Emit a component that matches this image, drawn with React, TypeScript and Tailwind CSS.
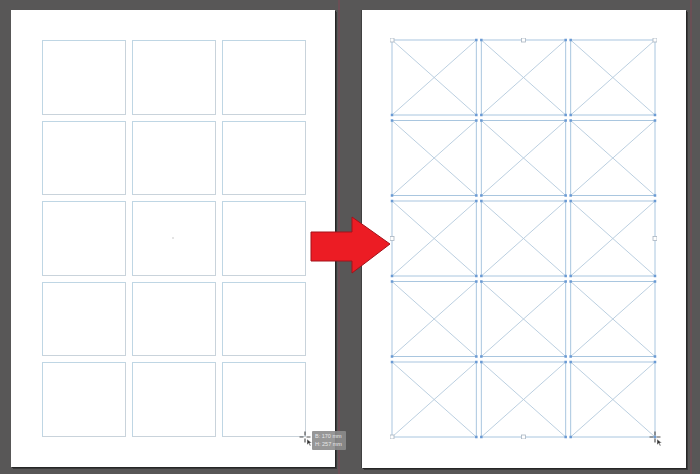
import React from "react";

// Layout grid geometry (px) shared by both pages
const GRID_W = 263;
const GRID_H = 397;
const COLS = 3;
const ROWS = 5;
const GAP_X = 5;
const GAP_Y = 5.5;
const CELL_W = (GRID_W - GAP_X * (COLS - 1)) / COLS;
const CELL_H = (GRID_H - GAP_Y * (ROWS - 1)) / ROWS;

const Cursor = () => (
  <svg width="16" height="16" viewBox="0 0 16 16" className="block">
    <path d="M6 0.5v4M6 7.5v4M0.5 6h4M7.5 6h4" stroke="#555" strokeWidth="1.2" />
    <path d="M8 8l0 6 1.6-1.6 1.4 2.6 1-0.6-1.4-2.4 2.2 0z" fill="#333" stroke="#fff" strokeWidth="0.5" />
  </svg>
);

const PlainGrid = () => (
  <div className="grid grid-cols-3 grid-rows-5 gap-x-[6px] gap-y-[6px] w-[264px] h-[397px]">
    {Array.from({ length: COLS * ROWS }).map((_, i) => (
      <div key={i} className="border-[1.5px] border-[#bfd6e4] border-r-[#c9d3db] border-b-[#c9d3db]" />
    ))}
  </div>
);

const FrameGrid = () => {
  const cells: React.ReactNode[] = [];
  const dots: React.ReactNode[] = [];
  for (let r = 0; r < ROWS; r++) {
    for (let c = 0; c < COLS; c++) {
      const x = 2 + c * (CELL_W + GAP_X);
      const y = 2 + r * (CELL_H + GAP_Y);
      cells.push(
        <g key={`c${r}-${c}`}>
          <rect x={x} y={y} width={CELL_W} height={CELL_H} fill="none" stroke="#a9c6df" strokeWidth="1" />
          <line x1={x} y1={y} x2={x + CELL_W} y2={y + CELL_H} stroke="#b3cadd" strokeWidth="0.9" />
          <line x1={x + CELL_W} y1={y} x2={x} y2={y + CELL_H} stroke="#b3cadd" strokeWidth="0.9" />
        </g>
      );
      [
        [x, y],
        [x + CELL_W, y],
        [x, y + CELL_H],
        [x + CELL_W, y + CELL_H],
      ].forEach(([px, py], k) =>
        dots.push(<rect key={`d${r}-${c}-${k}`} x={px - 1.25} y={py - 1.25} width="2.5" height="2.5" fill="#6a9ad4" />)
      );
    }
  }
  const W = GRID_W + 4;
  const H = GRID_H + 4;
  const handles = [
    [2, 2],
    [2 + GRID_W / 2, 2],
    [2 + GRID_W, 2],
    [2, 2 + GRID_H / 2],
    [2 + GRID_W, 2 + GRID_H / 2],
    [2, 2 + GRID_H],
    [2 + GRID_W / 2, 2 + GRID_H],
  ];
  return (
    <svg width={W} height={H} viewBox={`0 0 ${W} ${H}`} className="block">
      {cells}
      {dots}
      {handles.map(([hx, hy], i) => (
        <rect key={i} x={hx - 2} y={hy - 2} width="4" height="4" fill="#fff" stroke="#a8b4c0" strokeWidth="0.8" />
      ))}
    </svg>
  );
};

export default function App() {
  return (
    <div className="relative w-[700px] h-[474px] bg-[#585757] overflow-hidden font-['Liberation_Sans',Arial,sans-serif]">
      <div className="flex items-start pt-[10px] pl-[11px]">
        {/* left page */}
        <div className="relative w-[324px] h-[457px] bg-white shadow-[1px_1px_0_#262626,2px_2px_0_#3a3a3a] pt-[30px] pl-[31px]">
          <PlainGrid />
          <div className="absolute left-[161px] top-[227px] w-[2px] h-[2px] bg-[#e4e4e4]" />
          <div className="absolute left-[288px] top-[421px]">
            <Cursor />
          </div>
        </div>

        {/* pasteboard gap with bleed line */}
        <div className="w-[27px] h-[474px] -mt-[10px] pl-[3px]">
          <div className="w-[2px] h-full bg-[#6b4f55]" />
        </div>

        {/* right page */}
        <div className="relative w-[324px] h-[458px] bg-white shadow-[1px_1px_0_#262626,2px_2px_0_#3a3a3a,-1px_0_0_#404040] pt-[28px] pl-[28px]">
          <FrameGrid />
          <div className="absolute left-[287px] top-[421px]">
            <Cursor />
          </div>
        </div>

        <div className="w-[5px] h-[474px] -mt-[10px] pl-[4px]">
          <div className="w-[2px] h-full bg-[#6b4f55]" />
        </div>
      </div>

      {/* size tooltip */}
      <div className="absolute left-[312px] top-[431px] w-[34px] h-[19px] bg-[#8c8c8c]/90 rounded-[1px] px-[3px] pt-[2px] text-[5.5px] leading-[7.5px] text-[#e8e8e8]">
        <div>B: 170 mm</div>
        <div>H: 257 mm</div>
      </div>

      {/* red arrow */}
      <svg className="absolute left-0 top-0" width="700" height="474" viewBox="0 0 700 474">
        <polygon
          points="311,232 352,232 352,217 390,244 352,273 352,261 311,261"
          fill="#ec1c24"
          stroke="#a3121a"
          strokeWidth="1"
        />
      </svg>
    </div>
  );
}
